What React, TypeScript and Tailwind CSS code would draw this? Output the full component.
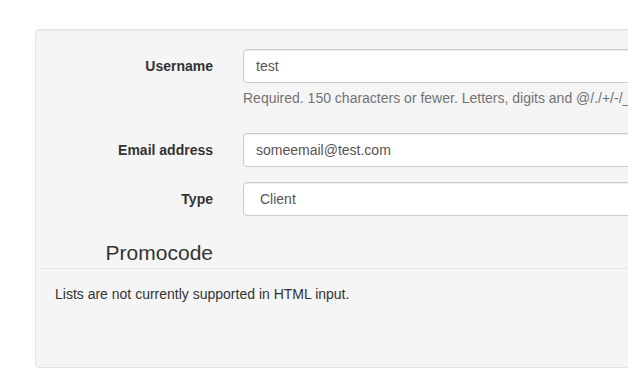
export default function App() {
  const labelCol = "w-[188px] shrink-0 pr-[15px] pt-[7px] text-right text-[14px] font-bold leading-[20px] text-[#333]";
  const input =
    "block h-[34px] w-full rounded-[4px] border border-[#ccc] bg-white px-[12px] text-[14px] text-[#555] shadow-[inset_0_1px_1px_rgba(0,0,0,0.075)] outline-none";

  return (
    <div
      className="h-[370px] w-[628px] overflow-hidden bg-white pl-[35px] pt-[29px]"
      style={{ fontFamily: '"Liberation Sans", Arial, sans-serif' }}
    >
      <div className="h-[339px] w-[800px] rounded-[4px] border border-[#e3e3e3] bg-[#f5f5f5] p-[19px] shadow-[inset_0_1px_1px_rgba(0,0,0,0.05)]">
        <form className="-mx-[15px]">
          <div className="mb-[15px] flex">
            <label className={labelCol}>Username</label>
            <div className="flex-1 px-[15px]">
              <input className={input} defaultValue="test" />
              <p className="mb-[10px] mt-[5px] text-[14px] leading-[20px] text-[#737373]">
                Required. 150 characters or fewer. Letters, digits and @/./+/-/_ only.
              </p>
            </div>
          </div>
          <div className="mb-[15px] flex">
            <label className={labelCol}>Email address</label>
            <div className="flex-1 px-[15px]">
              <input className={input} defaultValue="someemail@test.com" />
            </div>
          </div>
          <div className="mb-[15px] flex">
            <label className={labelCol}>Type</label>
            <div className="flex-1 px-[15px]">
              <div className={input + " flex items-center pl-[16px]"}>Client</div>
            </div>
          </div>
          <div className="mt-[22px] border-b border-[#e5e5e5]">
            <div className="w-[188px] pr-[15px] text-right text-[21px] leading-[30px] text-[#333]">
              Promocode
            </div>
          </div>
          <p className="mt-[15px] px-[15px] text-[14px] leading-[20px] text-[#333]">
            Lists are not currently supported in HTML input.
          </p>
        </form>
      </div>
    </div>
  );
}
